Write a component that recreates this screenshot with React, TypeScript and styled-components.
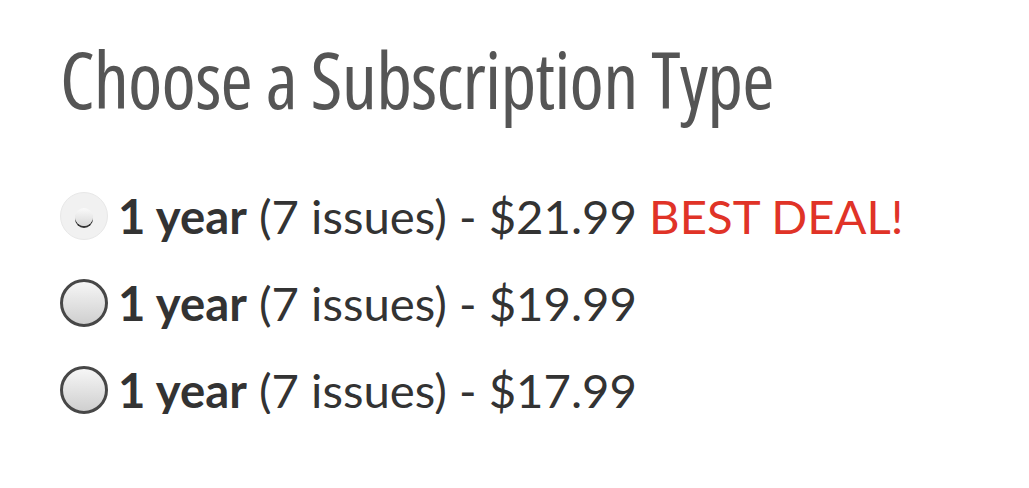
import React from "react";
import styled, { createGlobalStyle } from "styled-components";

const Global = createGlobalStyle`
  html, body { margin: 0; padding: 0; background: #fff; }
  body { font-family: "Lato", "Liberation Sans", sans-serif; }
`;

const Page = styled.div`
  padding: 39px 0 0 60px;
`;

const Title = styled.h1`
  margin: 0;
  font-family: "Open Sans", "DejaVu Sans", sans-serif;
  font-stretch: 75%;
  font-weight: 500;
  font-size: 78px;
  line-height: 80px;
  letter-spacing: -0.8px;
  color: #555;
  white-space: nowrap;
`;

const List = styled.div`
  margin-top: 73px;
  display: flex;
  flex-direction: column;
  gap: 39px;
`;

const Row = styled.label`
  display: flex;
  align-items: center;
  gap: 10px;
  font-size: 47.3px;
  line-height: 48px;
  color: #333;
  white-space: nowrap;
`;

const Radio = styled.span<{ $active?: boolean }>`
  position: relative;
  flex: 0 0 auto;
  box-sizing: border-box;
  width: 48px;
  height: 48px;
  border-radius: 50%;
  ${(p) =>
    p.$active
      ? `background: #f1f1f1; border: 1px solid #e8e8e8;`
      : `background: linear-gradient(#f6f6f6, #cfcfcf); border: 3px solid #474747;`}
`;

const Dot = styled.span`
  position: absolute;
  left: 50%;
  top: 50%;
  width: 18px;
  height: 18px;
  margin: -8px 0 0 -9px;
  border-radius: 50%;
  background: linear-gradient(#fafafa, #d8d8d8);
  box-shadow: 0 2px 0 #333;
`;

const Bold = styled.b`
  font-weight: 700;
`;

const Deal = styled.span`
  color: #e03327;
`;

const options = [
  { price: "$21.99", deal: true },
  { price: "$19.99", deal: false },
  { price: "$17.99", deal: false },
];

export default function App() {
  return (
    <>
      <Global />
      <Page>
        <Title>Choose a Subscription Type</Title>
        <List>
          {options.map((o, i) => (
            <Row key={i}>
              <Radio $active={o.deal}>{o.deal && <Dot />}</Radio>
              <span>
                <Bold>1 year</Bold> (7 issues) - {o.price}
                {o.deal && <Deal> BEST DEAL!</Deal>}
              </span>
            </Row>
          ))}
        </List>
      </Page>
    </>
  );
}
